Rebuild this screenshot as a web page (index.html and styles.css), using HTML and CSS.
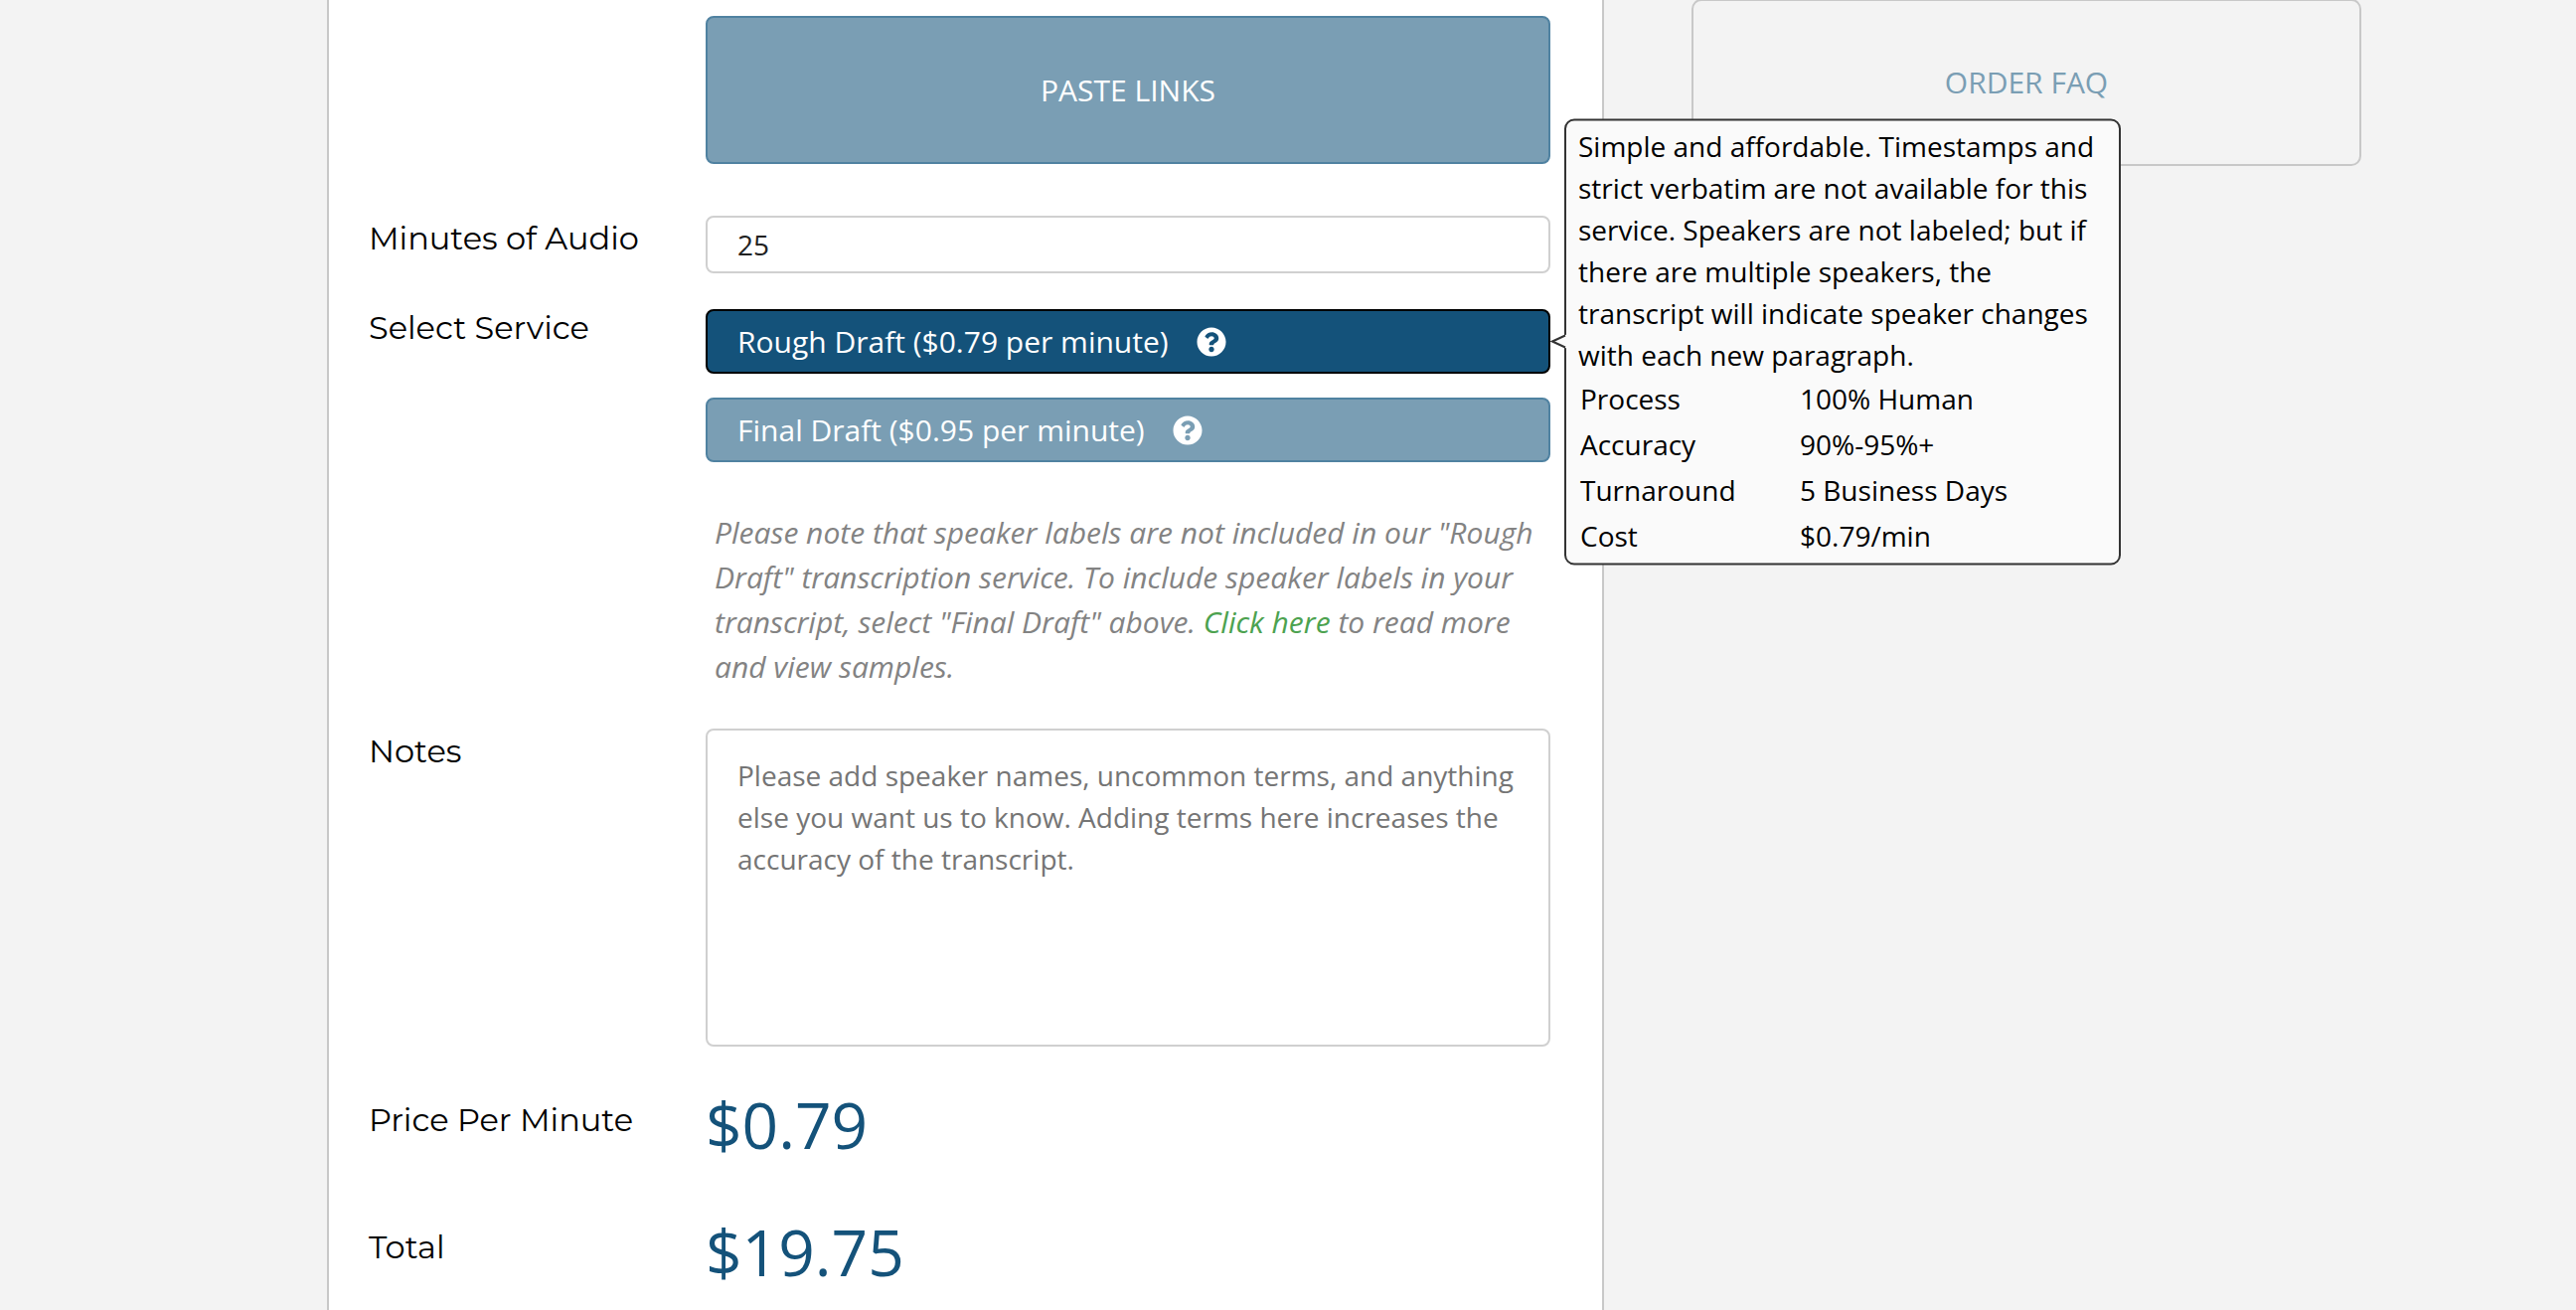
FILE: index.html
```html
<!DOCTYPE html>
<html lang="en">
<head>
<meta charset="utf-8">
<meta name="viewport" content="width=device-width, initial-scale=1">
<title>Order Transcription</title>
<link rel="stylesheet" href="styles.css">
</head>
<body>
<svg class="sprite" aria-hidden="true">
  <symbol id="icon-help" viewBox="0 0 512 512">
    <path d="M504 256c0 136.997-111.043 248-248 248S8 392.997 8 256C8 119.083 119.043 8 256 8s248 111.083 248 248zM262.655 90c-54.497 0-89.255 22.957-116.549 63.758-3.536 5.286-2.353 12.415 2.715 16.258l34.699 26.31c5.205 3.947 12.621 3.008 16.665-2.122 17.864-22.658 30.113-35.797 57.303-35.797 20.429 0 45.698 13.148 45.698 32.958 0 14.976-12.363 22.667-32.534 33.976C247.128 238.528 216 254.941 216 296v4c0 6.627 5.373 12 12 12h56c6.627 0 12-5.373 12-12v-1.333c0-28.462 83.186-29.647 83.186-106.667 0-58.002-60.165-102-116.531-102zM256 338c-25.365 0-46 20.635-46 46 0 25.364 20.635 46 46 46s46-20.636 46-46c0-25.364-20.635-46-46-46z"/>
  </symbol>
</svg>
<div class="page">
  <main class="panel">
    <form class="order">
      <div class="row row-links">
        <button type="button" class="btn btn-links">PASTE LINKS</button>
      </div>

      <div class="row row-minutes">
        <label class="label" for="minutes">Minutes of Audio</label>
        <input class="input" id="minutes" type="text" inputmode="numeric" value="25">
      </div>

      <div class="row row-service">
        <span class="label label-flush" id="service-label">Select Service</span>
        <div class="services" role="group" aria-labelledby="service-label">
          <div class="service">
            <button type="button" class="btn btn-service is-selected" aria-pressed="true" aria-describedby="rough-tip">Rough Draft ($0.79 per minute)<svg class="help"><use href="#icon-help"/></svg></button>
            <div class="tooltip" id="rough-tip" role="tooltip">
              <svg class="caret" viewBox="0 0 16 14" aria-hidden="true"><path class="caret-fill" d="M16 0L1 7l15 7z"/><path class="caret-line" d="M15 1L2 7l13 6"/></svg>
              <p class="tooltip-text">Simple and affordable. Timestamps and strict verbatim are not available for this service. Speakers are not labeled; but if there are multiple speakers, the transcript will indicate speaker changes with each new paragraph.</p>
              <table class="facts">
                <tbody>
                  <tr><th scope="row">Process</th><td>100% Human</td></tr>
                  <tr><th scope="row">Accuracy</th><td>90%-95%+</td></tr>
                  <tr><th scope="row">Turnaround</th><td>5 Business Days</td></tr>
                  <tr><th scope="row">Cost</th><td>$0.79/min</td></tr>
                </tbody>
              </table>
            </div>
          </div>
          <div class="service">
            <button type="button" class="btn btn-service" aria-pressed="false">Final Draft ($0.95 per minute)<svg class="help"><use href="#icon-help"/></svg></button>
          </div>
          <p class="hint">Please note that speaker labels are not included in our "Rough Draft" transcription service. To include speaker labels in your transcript, select "Final Draft" above. <a class="hint-link" href="#samples">Click here</a> to read more and view samples.</p>
        </div>
      </div>

      <div class="row row-notes">
        <label class="label" for="notes">Notes</label>
        <textarea class="input notes" id="notes" placeholder="Please add speaker names, uncommon terms, and anything else you want us to know. Adding terms here increases the accuracy of the transcript."></textarea>
      </div>

      <div class="row row-price">
        <label class="label label-price" for="rate">Price Per Minute</label>
        <output class="price" id="rate">$0.79</output>
      </div>

      <div class="row row-total">
        <label class="label label-price" for="total">Total</label>
        <output class="price" id="total">$19.75</output>
      </div>
    </form>
  </main>
  <aside class="side">
    <a class="faq" href="#faq">ORDER FAQ</a>
  </aside>
</div>
</body>
</html>
```
FILE: styles.css
```css
* {
  box-sizing: border-box;
}

body {
  margin: 0;
  background: #f3f3f3;
  color: #000;
  font-family: "Open Sans", sans-serif;
  font-size: 28px;
  line-height: 42px;
}

.sprite {
  display: none;
}

.page {
  display: grid;
  grid-template-columns: 1285fr 674fr;
  column-gap: 88px;
  height: 100vh;
  padding: 0 216px 0 329px;
  overflow: hidden;
}

.panel {
  padding: 16px 52px 0 40px;
  background: #fff;
  border: solid #c8c8c8;
  border-width: 0 2px;
}

.row {
  display: grid;
  grid-template-columns: 339px 1fr;
  align-items: start;
}

.row-minutes {
  margin-top: 52px;
}

.row-service {
  margin-top: 36px;
}

.row-price {
  margin-top: 35px;
}

.row-notes,
.row-total {
  margin-top: 40px;
}

.label {
  padding-top: 4px;
  font-family: "Montserrat", "Inter", sans-serif;
  font-size: 32px;
  line-height: 38px;
}

.label-flush {
  padding-top: 0;
}

.label-price {
  padding-top: 20px;
}

.btn {
  display: block;
  width: 100%;
  background: #7a9eb4;
  border: 2px solid #5082a1;
  border-radius: 8px;
  color: #fff;
  font: inherit;
  font-size: 30px;
  cursor: pointer;
}

.btn-links {
  grid-column: 2;
  height: 149px;
}

.services {
  display: flex;
  flex-direction: column;
  gap: 24px;
}

.service {
  position: relative;
}

.btn-service {
  display: flex;
  align-items: center;
  gap: 28px;
  height: 65px;
  padding: 0 30px;
}

.btn-service.is-selected {
  background: #14527a;
  border-color: #000;
}

.help {
  width: 30px;
  height: 30px;
  fill: currentColor;
}

.input {
  width: 100%;
  height: 58px;
  padding: 0 30px;
  background: #fff;
  border: 2px solid #d0d0d0;
  border-radius: 8px;
  color: #212121;
  font: inherit;
}

.notes {
  display: block;
  height: 320px;
  padding: 24px 30px;
  resize: none;
}

.notes::placeholder {
  color: #757575;
}

.hint {
  margin: 24px 0 0;
  padding: 0 9px;
  color: #838383;
  font-size: 30px;
  font-style: italic;
  line-height: 45px;
}

.hint-link {
  color: #4ca24f;
  text-decoration: none;
}

.price {
  color: #14527a;
  font-size: 64px;
  line-height: 88px;
}

.tooltip {
  position: absolute;
  z-index: 1;
  top: 50%;
  left: 100%;
  width: 560px;
  margin-left: 14px;
  padding: 4px 12px 5px;
  background: #fafafa;
  border: 2px solid #333;
  border-radius: 10px;
  transform: translateY(-50%);
}

.caret {
  position: absolute;
  top: 50%;
  right: 100%;
  width: 16px;
  height: 14px;
  margin-top: -7px;
}

.caret-fill {
  fill: #fafafa;
}

.caret-line {
  fill: none;
  stroke: #333;
  stroke-width: 2;
}

.tooltip-text {
  margin: 0;
}

.facts {
  border-collapse: collapse;
}

.facts th,
.facts td {
  padding: 2px;
  font-weight: 400;
  text-align: left;
}

.facts th {
  width: 221px;
}

.faq {
  display: flex;
  align-items: center;
  justify-content: center;
  height: 168px;
  margin-top: -1px;
  border: 2px solid #c8c8c8;
  border-radius: 10px;
  color: #7a9eb4;
  font-size: 30px;
  text-decoration: none;
}
```
